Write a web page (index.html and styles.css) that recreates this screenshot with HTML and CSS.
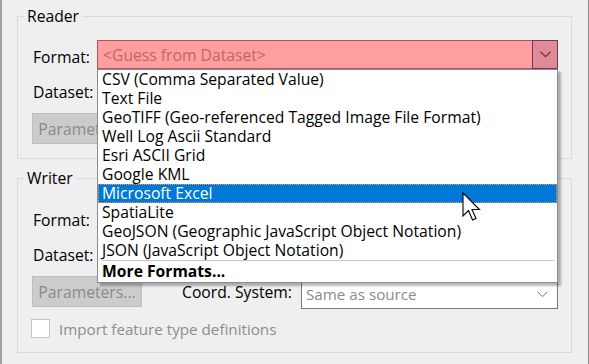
FILE: index.html
```html
<!DOCTYPE html>
<html>
<head>
<meta charset="utf-8">
<link rel="stylesheet" href="styles.css">
</head>
<body>
<div class="window">
  <fieldset class="group reader">
    <legend>Reader</legend>
    <div class="row">
      <span class="lbl">Format:</span>
      <div class="combo combo-error">
        <span class="combo-text">&lt;Guess from Dataset&gt;</span>
        <span class="combo-btn">
          <svg width="11" height="7" viewBox="0 0 11 7"><path d="M0.5 0.8 L5.5 5.6 L10.5 0.8" fill="none" stroke="#8a2430" stroke-width="1.2"/></svg>
        </span>
        <ul class="list">
          <li>CSV (Comma Separated Value)</li>
          <li>Text File</li>
          <li>GeoTIFF (Geo-referenced Tagged Image File Format)</li>
          <li>Well Log Ascii Standard</li>
          <li>Esri ASCII Grid</li>
          <li>Google KML</li>
          <li class="sel">Microsoft Excel</li>
          <li>SpatiaLite</li>
          <li>GeoJSON (Geographic JavaScript Object Notation)</li>
          <li>JSON (JavaScript Object Notation)</li>
          <li class="sep"></li>
          <li class="more">More Formats...</li>
        </ul>
      </div>
    </div>
    <div class="row">
      <span class="lbl">Dataset:</span>
      <div class="combo"></div>
    </div>
    <div class="row row-btn">
      <button class="btn" disabled>Parameters...</button>
    </div>
  </fieldset>

  <fieldset class="group writer">
    <legend>Writer</legend>
    <div class="row">
      <span class="lbl">Format:</span>
      <div class="combo"></div>
    </div>
    <div class="row">
      <span class="lbl">Dataset:</span>
      <div class="combo"></div>
    </div>
    <div class="row row-btn">
      <button class="btn" disabled>Parameters...</button>
      <span class="coord-lbl">Coord. System:</span>
      <div class="combo combo-plain">
        <span class="combo-text muted">Same as source</span>
        <svg class="chev" width="11" height="7" viewBox="0 0 11 7"><path d="M0.5 0.8 L5.5 5.6 L10.5 0.8" fill="none" stroke="#6a6a6a" stroke-width="1"/></svg>
      </div>
    </div>
    <div class="row row-check">
      <span class="check"></span>
      <span class="check-lbl">Import feature type definitions</span>
    </div>
  </fieldset>

  <svg class="cursor" width="20" height="30" viewBox="0 0 20 30">
    <path d="M1 1 L1 24 L6.5 18.5 L10.5 28 L14 26.5 L10 17.5 L17.5 17.5 Z" fill="#fff" stroke="#000" stroke-width="1.1" stroke-linejoin="miter"/>
  </svg>
</div>
</body>
</html>
```

FILE: styles.css
```css
* { box-sizing: border-box; }
html, body {
  margin: 0;
  padding: 0;
  background: #efefef;
}
body {
  font-family: "Open Sans", "Noto Sans", sans-serif;
  font-size: 15.7px;
  color: #000;
}
.window {
  position: relative;
  width: 589px;
  height: 364px;
  border-left: 2px solid #a3a3a3;
  border-right: 1px solid #8e8e8e;
  padding: 6px 0 0 15px;
  background: #efefef;
}
.group {
  width: 555px;
  margin: 0;
  border: 1px solid #dadada;
  padding: 14px 13px 14px 14px;
  min-width: 0;
}
.group legend {
  margin-left: -8px;
  padding: 0 3px;
  line-height: 20px;
  height: 20px;
}
.writer {
  margin-top: 9px;
  padding-top: 15px;
}
.row {
  display: flex;
  align-items: center;
  height: 29px;
  margin-bottom: 6px;
}
.row-btn {
  height: 31px;
  margin-top: 9px;
  margin-bottom: 0;
}
.lbl {
  width: 65px;
  flex: none;
  padding-left: 1px;
  padding-top: 4px;
}
.combo {
  position: relative;
  flex: 1;
  height: 29px;
  background: #fff;
  border: 1px solid #7a7a7a;
  display: flex;
  align-items: center;
}
.combo-text {
  flex: 1;
  padding-left: 4px;
  white-space: nowrap;
}
.combo-error {
  background: #ff9e9e;
  border-color: #b85060;
  border-right: none;
}
.combo-error .combo-text {
  color: #c4646a;
  padding-left: 5px;
}
.combo-btn {
  width: 26px;
  height: 29px;
  margin-top: -1px;
  margin-bottom: -1px;
  background: #e08c98;
  border: 1px solid #6e3a62;
  display: flex;
  align-items: center;
  justify-content: center;
}
.list {
  position: absolute;
  left: -1px;
  top: 28px;
  width: 461px;
  margin: 0;
  padding: 0 0 1px 0;
  list-style: none;
  background: #fff;
  border: 1px solid #8c8c8c;
  box-shadow: 3px 3px 2px rgba(0, 0, 0, 0.28);
  z-index: 5;
}
.list li {
  height: 19px;
  line-height: 19px;
  padding-left: 4px;
  white-space: nowrap;
  color: #000;
}
.list li.sel {
  background: #0078d7;
  color: #fff;
  outline: 1px dotted #f0a040;
  outline-offset: -1px;
}
.list li.sep {
  height: 1px;
  margin: 0 3px 1px 4px;
  background: #c8c8c8;
  padding: 0;
}
.list li.more {
  font-weight: 700;
}
.btn {
  width: 110px;
  height: 31px;
  background: #cccccc;
  border: 1px solid #bfbfbf;
  color: #8a8a8a;
  font: inherit;
  padding: 0;
  text-align: center;
}
.coord-lbl {
  margin-left: 40px;
  width: 119px;
  flex: none;
}
.combo-plain {
  align-self: flex-start;
  height: 30px;
  margin-top: 3px;
  border-color: #7a7a7a;
}
.muted { color: #8a8a8a; font-size: 15.2px; }
.chev { margin-right: 9px; }
.row-check {
  height: 19px;
  margin-top: 12px;
  margin-bottom: 0;
}
.check {
  width: 19px;
  height: 19px;
  margin-left: -1px;
  background: #fff;
  border: 1px solid #c4c4c4;
}
.check-lbl {
  margin-left: 9px;
  color: #8d8d8d;
  font-size: 15.2px;
}
.cursor {
  position: absolute;
  left: 460px;
  top: 192px;
  z-index: 10;
}
```
